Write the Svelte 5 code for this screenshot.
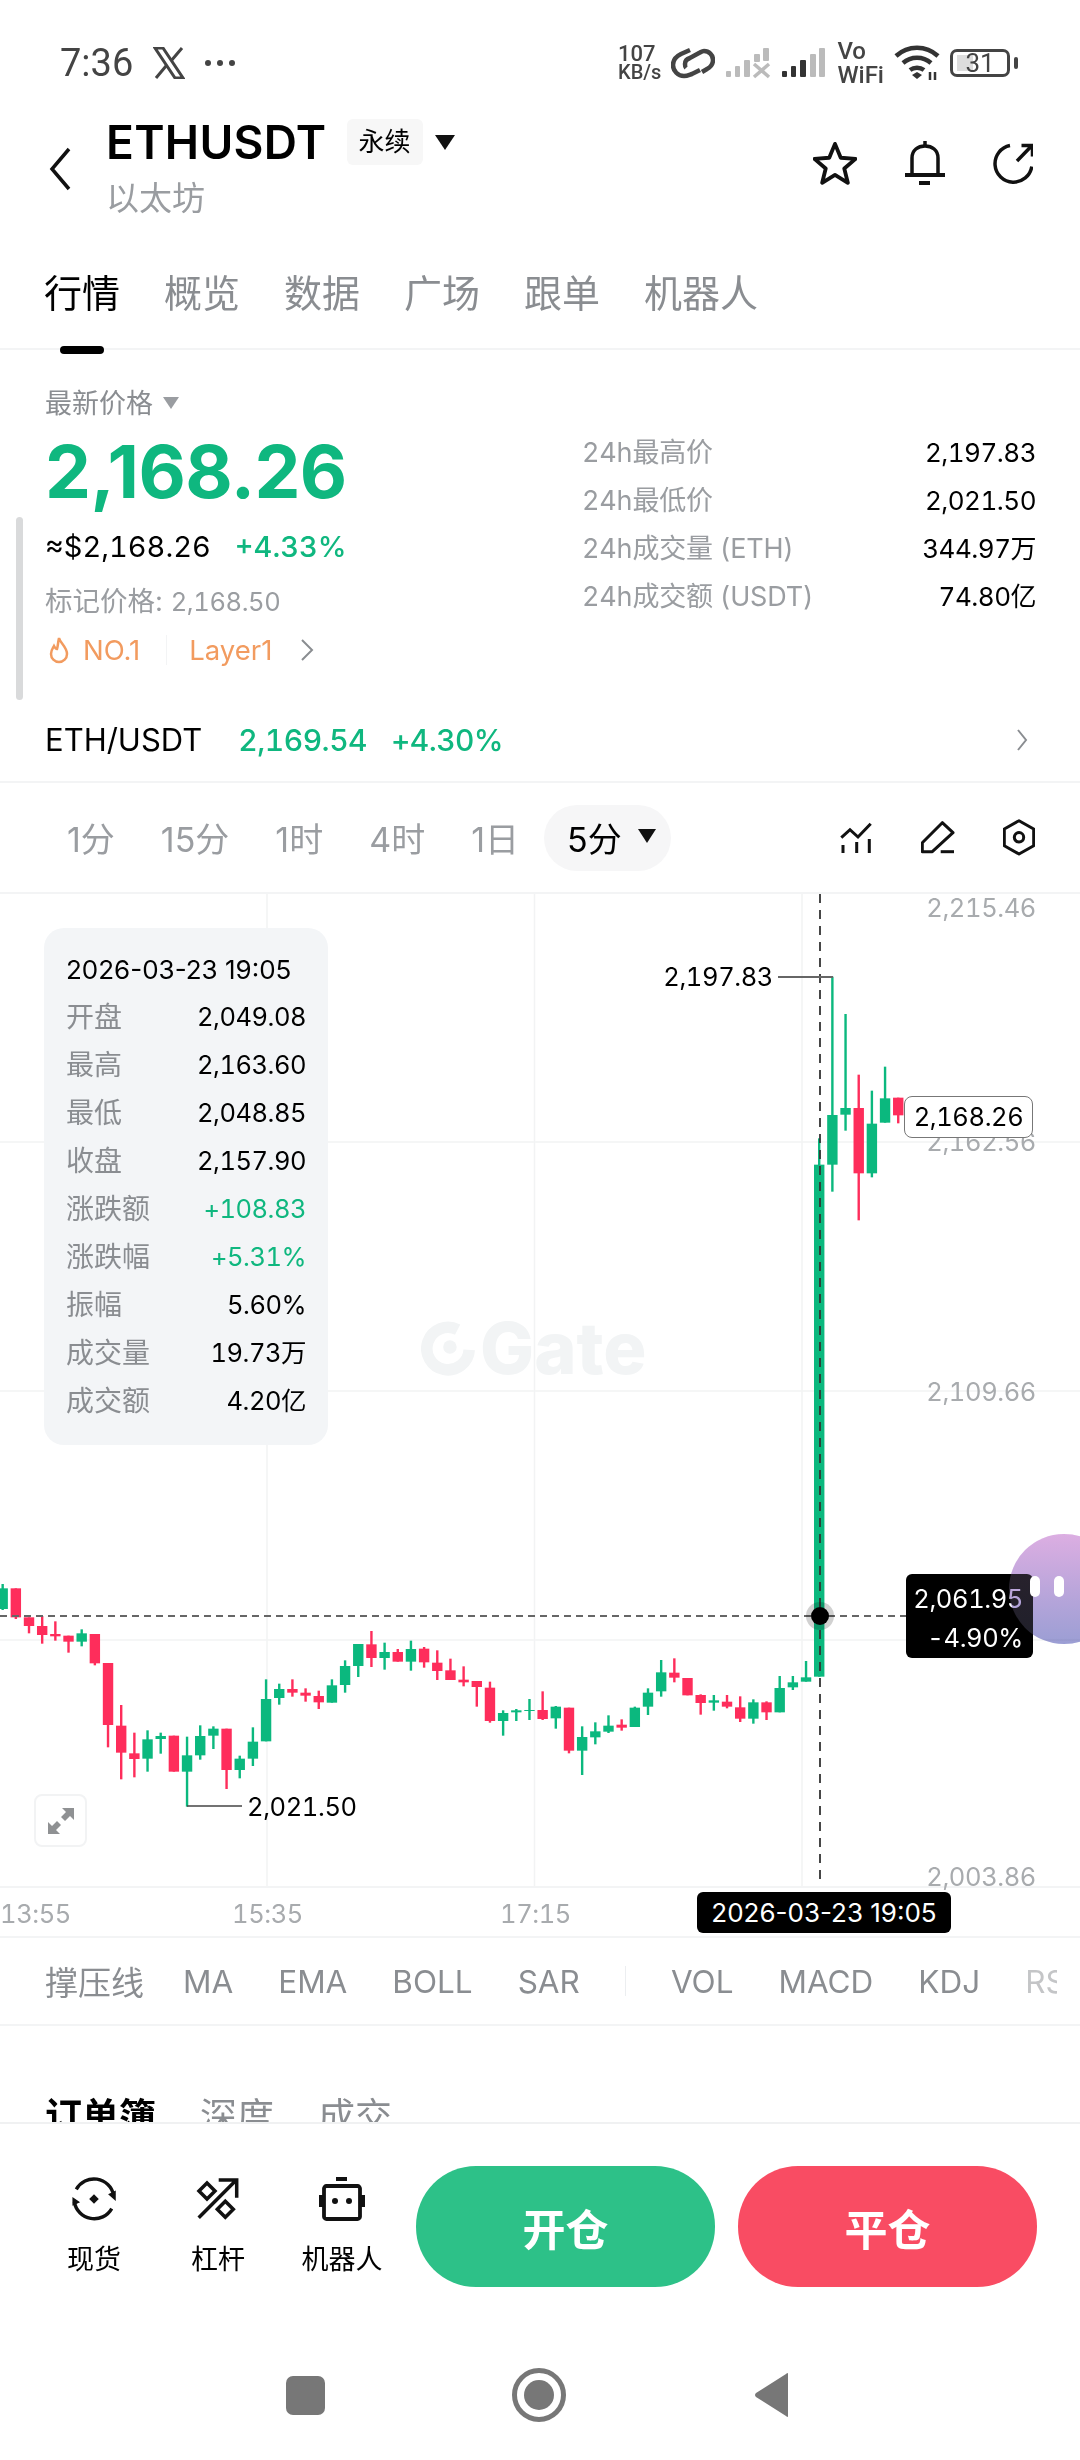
<script>
	// [up, bodyTop, bodyBottom, wickTop, wickBottom] in 1/3 px from y = 1540
	const candles = [
		[1, 145, 207, 132, 210],
		[0, 145, 232, 145, 237],
		[0, 232, 258, 232, 280],
		[0, 258, 285, 228, 311],
		[0, 282, 289, 244, 302],
		[0, 287, 305, 287, 338],
		[1, 280, 305, 268, 319],
		[0, 282, 370, 282, 376],
		[0, 369, 555, 369, 622],
		[0, 557, 638, 495, 718],
		[0, 640, 657, 578, 712],
		[1, 598, 656, 571, 695],
		[1, 588, 597, 578, 641],
		[0, 587, 695, 587, 695],
		[1, 646, 695, 590, 800],
		[1, 588, 646, 556, 659],
		[1, 566, 587, 559, 627],
		[0, 566, 690, 566, 747],
		[1, 656, 690, 647, 715],
		[1, 605, 656, 562, 678],
		[1, 477, 604, 418, 604],
		[1, 447, 474, 431, 494],
		[0, 447, 458, 418, 470],
		[0, 458, 467, 445, 485],
		[0, 468, 487, 452, 507],
		[1, 436, 488, 418, 488],
		[1, 378, 435, 361, 458],
		[1, 312, 378, 312, 411],
		[0, 313, 354, 273, 381],
		[1, 336, 354, 308, 389],
		[0, 336, 365, 327, 365],
		[1, 327, 365, 302, 392],
		[0, 326, 367, 321, 383],
		[0, 368, 393, 331, 420],
		[0, 391, 420, 356, 420],
		[0, 419, 427, 379, 439],
		[0, 423, 441, 423, 500],
		[0, 443, 543, 425, 548],
		[1, 519, 543, 511, 587],
		[1, 511, 517, 507, 543],
		[1, 510, 513, 477, 540],
		[0, 510, 537, 454, 540],
		[1, 500, 535, 498, 566],
		[0, 503, 632, 503, 640],
		[1, 591, 632, 559, 705],
		[1, 574, 592, 547, 613],
		[1, 557, 575, 526, 579],
		[0, 554, 563, 538, 572],
		[1, 503, 561, 500, 561],
		[1, 458, 500, 445, 525],
		[1, 397, 454, 360, 470],
		[0, 398, 413, 355, 427],
		[0, 414, 466, 414, 466],
		[0, 465, 489, 463, 524],
		[1, 481, 488, 465, 512],
		[0, 485, 500, 465, 505],
		[0, 502, 536, 469, 546],
		[1, 487, 536, 478, 551],
		[0, 487, 517, 484, 540],
		[1, 444, 517, 408, 517],
		[1, 427, 442, 408, 450],
		[1, 412, 425, 363, 425],
		[1, -1126, 410, -1205, 410],
		[1, -1275, -1126, -1690, -1045],
		[1, -1296, -1276, -1578, -1228],
		[0, -1296, -1100, -1396, -959],
		[1, -1249, -1100, -1348, -1088],
		[1, -1325, -1252, -1420, -1252],
		[0, -1327, -1274, -1327, -1250]
	];
	const cx = (i) => 2.67 + 13.17 * i;
	const cy = (v) => 1540 + v / 3;

	const tabs = ['行情', '概览', '数据', '广场', '跟单', '机器人'];
	const stats = [
		['24h最高价', '2,197.83'],
		['24h最低价', '2,021.50'],
		['24h成交量 (ETH)', '344.97万'],
		['24h成交额 (USDT)', '74.80亿']
	];
	const intervals = ['1分', '15分', '1时', '4时', '1日'];
	const ohlc = [
		['开盘', '2,049.08'],
		['最高', '2,163.60'],
		['最低', '2,048.85'],
		['收盘', '2,157.90'],
		['涨跌额', '+108.83', true],
		['涨跌幅', '+5.31%', true],
		['振幅', '5.60%'],
		['成交量', '19.73万'],
		['成交额', '4.20亿']
	];
	const yLabels = [
		['2,215.46', 14],
		['2,162.56', 248],
		['2,109.66', 498],
		['2,003.86', 983]
	];
	const mainInd = ['MA', 'EMA', 'BOLL', 'SAR'];
	const subInd = ['VOL', 'MACD', 'KDJ'];
</script>

<div class="page">
	<div class="status">
		<div class="status-left">
			<span class="time">7:36</span>
			<svg width="32" height="32" viewBox="0 0 32 32" class="x-logo">
				<path d="M2 1h8l20 30h-8z" fill="none" stroke="#444" stroke-width="3" />
				<path d="M29 1 18 14M13 19 3 31" stroke="#444" stroke-width="3" fill="none" />
			</svg>
			<span class="dots"><i></i><i></i><i></i></span>
		</div>
		<div class="status-right">
			<div class="speed"><b>107</b><span>KB/s</span></div>
			<svg width="44" height="34" viewBox="0 0 44 34" fill="none" stroke="#444" stroke-width="4.5">
				<path d="M19 4 10 8C4 11 2 15 2 19c0 6 5 11 11 11 3 0 5-1 8-2l8-4" />
				<path d="M15 22c-1-1-1-2-1-4 0-3 2-5 5-6l9-5c2-1 3-2 5-2 5 0 9 4 9 9 0 4-2 7-6 9l-5 3" />
			</svg>
			<svg width="46" height="32" viewBox="0 0 46 32" fill="#bbb">
				<rect x="1" y="24" width="5" height="6" rx="1" />
				<rect x="10" y="19" width="5" height="11" rx="1" />
				<rect x="19" y="13" width="6" height="17" rx="1" />
				<rect x="29" y="7" width="6" height="8" rx="1" />
				<rect x="38" y="1" width="6" height="13" rx="1" />
				<path d="M29 17l15 13M44 17 29 30" stroke="#bbb" stroke-width="3.5" />
			</svg>
			<svg width="46" height="32" viewBox="0 0 46 32">
				<rect x="1" y="24" width="5" height="6" rx="1" fill="#333" />
				<rect x="10" y="19" width="5" height="11" rx="1" fill="#333" />
				<rect x="19" y="13" width="6" height="17" rx="1" fill="#333" />
				<rect x="29" y="7" width="6" height="23" rx="1" fill="#bbb" />
				<rect x="38" y="1" width="6" height="29" rx="1" fill="#bbb" />
			</svg>
			<div class="vowifi"><span>Vo</span><span>WiFi</span></div>
			<svg width="46" height="36" viewBox="0 0 46 36" fill="none" stroke="#333" stroke-width="4.5">
				<path d="M2 11c12-11 30-11 42 0" />
				<path d="M9 18c8-7 20-7 28 0" />
				<path d="M16 25c4-3 10-3 14 0" />
				<path d="M23 34l-5-4 5-3 5 3z" fill="#333" stroke="none" />
				<path d="M36 27v8M41 27v8" stroke-width="2.5" />
			</svg>
			<div class="battery">
				<div class="fill"></div>
				<span>31</span>
			</div>
			<div class="nub"></div>
		</div>
	</div>

	<div class="header">
		<svg width="24" height="46" viewBox="0 0 24 46" fill="none" stroke="#111" stroke-width="3.5" class="back">
			<path d="M21 3 4 23l17 20" />
		</svg>
		<div class="title">
			<div class="title-row">
				<span class="symbol">ETHUSDT</span>
				<span class="badge">永续</span>
				<span class="caret"></span>
			</div>
			<div class="subtitle">以太坊</div>
		</div>
		<div class="header-icons">
			<svg width="44" height="44" viewBox="0 0 46 46" fill="none" stroke="#111" stroke-width="4" stroke-linejoin="round">
				<path d="M23 3l6 14.500 15.500 1.200-11.800 10 3.700 15L23 35.500 9.600 43.700l3.700-15-11.800-10L17 17.500z" />
			</svg>
			<svg width="40" height="46" viewBox="0 0 40 46" fill="none" stroke="#111" stroke-width="3.5">
				<path d="M7 33V18C7 10 13 6 20 6s13 4 13 12v15" />
				<path d="M20 1v5" />
				<path d="M0 35h40" stroke-width="3.8" />
				<path d="M14 43h11" stroke-width="4" />
			</svg>
			<svg width="40" height="42" viewBox="0 0 40 42" fill="none" stroke="#111" stroke-width="3.5">
				<path d="M17 3.500A18.500 18.500 0 1 0 38.800 24.500" />
				<path d="M24 19 39 3.500M28.500 3.500h11v11" />
			</svg>
		</div>
	</div>

	<div class="tabs">
		{#each tabs as tab, i}
			<div class="tab" class:active={i === 0}>{tab}</div>
		{/each}
	</div>

	<div class="overview">
		<div class="scroll-thumb"></div>
		<div class="price-col">
			<div class="latest">最新价格 <span class="caret small"></span></div>
			<div class="price">2,168.26</div>
			<div class="approx"><span>≈$2,168.26</span><span class="green">+4.33%</span></div>
			<div class="mark">标记价格: <span class="num">2,168.50</span></div>
			<div class="rank">
				<svg width="22" height="28" viewBox="0 0 22 28" fill="none" stroke="#f29b5f" stroke-width="2.5">
					<path d="M11 2c1 5 8 9 8 16a8 8 0 0 1-16 0c0-4 2-6 3-8 1 2 2 3 3 3 1-3 1-7 2-11z" />
				</svg>
				<span class="no">NO.1</span>
				<span class="rank-sep"></span>
				<span>Layer1</span>
				<svg width="14" height="24" viewBox="0 0 14 24" fill="none" stroke="#8a8d91" stroke-width="2" class="rank-arrow">
					<path d="M2 2l10 10L2 22" />
				</svg>
			</div>
		</div>
		<div class="stats">
			{#each stats as [label, value]}
				<div class="stat"><span class="stat-label">{label}</span><span>{value}</span></div>
			{/each}
		</div>
	</div>

	<div class="spot-row">
		<span class="pair">ETH/USDT</span>
		<span class="green spot-price">2,169.54</span>
		<span class="green spot-pct">+4.30%</span>
		<svg width="12" height="24" viewBox="0 0 12 24" fill="none" stroke="#8a8d91" stroke-width="2" class="spot-arrow">
			<path d="M2 2l8 10-8 10" />
		</svg>
	</div>

	<div class="intervals">
		{#each intervals as item}
			<span class="interval">{item}</span>
		{/each}
		<span class="interval-pill">5分<span class="caret"></span></span>
		<div class="interval-icons">
			<svg width="33" height="32" viewBox="0 0 33 32" fill="none" stroke="#111" stroke-width="3">
				<path d="M1.300 15.700 10 7.700l8 7.300L30.700 1.700" />
				<path d="M3 23v8M16.700 20v11M29.300 17v14" />
			</svg>
			<svg width="34" height="33" viewBox="0 0 34 33" fill="none" stroke="#111" stroke-width="3" stroke-linejoin="round">
				<path d="M1.300 21.700 21.300 1.700 32 11.700 11.300 30.700h-10z" />
				<path d="M19.700 30.700H33" />
			</svg>
			<svg width="32" height="37" viewBox="0 0 32 37" fill="none" stroke="#111" stroke-width="3" stroke-linejoin="round">
				<path d="M16 1.700 30.700 10v16.700L16 35 1.300 26.700V10z" />
				<circle cx="16" cy="18.300" r="4.700" />
			</svg>
		</div>
	</div>

	<div class="chart">
		<svg class="plot" width="1080" height="992" viewBox="0 894 1080 992">
			<g stroke="#f2f3f4" stroke-width="1.5">
				<path d="M267 894v994M534.500 894v994M802 894v994" />
				<path d="M0 1142h1080M0 1391h1080M0 1640h1080" />
			</g>
			{#each candles as [up, top, bottom, wickTop, wickBottom], i}
				<g fill={up ? '#0bb87e' : '#fe2d5b'}>
					<rect x={cx(i) - 1.2} y={cy(wickTop)} width="2.4" height={cy(wickBottom) - cy(wickTop)} />
					<rect x={cx(i) - 5.2} y={cy(top)} width="10.4" height={cy(bottom) - cy(top)} />
				</g>
			{/each}
			<path d="M0 1616h906" stroke="#666" stroke-width="1.8" stroke-dasharray="7 5" />
			<path d="M820 894v994" stroke="#333" stroke-width="1.8" stroke-dasharray="9 7" />
			<circle cx="820" cy="1616" r="14" fill="#000" opacity="0.18" />
			<circle cx="820" cy="1616" r="9" fill="#000" />
			<path d="M778 977h55" stroke="#666" stroke-width="1.8" />
			<path d="M187 1806h55" stroke="#444" stroke-width="1.6" />
		</svg>

		<div class="watermark">
			<svg width="54" height="56" viewBox="0 0 56 56" fill="none" stroke="#f2f4f5" stroke-width="12">
				<path d="M38 9a22 22 0 1 0 12 21" />
				<circle cx="30" cy="27" r="7" fill="#f2f4f5" stroke="none" />
			</svg>
			<span>Gate</span>
		</div>

		{#each yLabels as [text, top]}
			<span class="y-label" style="top: {top - 13}px">{text}</span>
		{/each}

		<div class="ohlc">
			<div class="ohlc-date">2026-03-23 19:05</div>
			{#each ohlc as [label, value, up]}
				<div class="ohlc-row">
					<span class="ohlc-label">{label}</span>
					<span class:green={up}>{value}</span>
				</div>
			{/each}
		</div>

		<span class="mark-label high">2,197.83</span>
		<span class="mark-label low">2,021.50</span>

		<div class="last-price">2,168.26</div>

		<div class="cross-price">
			<span>2,061.95</span>
			<span>-4.90%</span>
		</div>
		<div class="bubble"></div>
		<div class="bubble tint"></div>
		<div class="bubble-eyes"><i></i><i></i></div>

		<div class="expand">
			<svg width="28" height="28" viewBox="0 0 28 28" fill="#8f9193">
				<path d="M15 1h12v12l-4-4-5 5-4-4 5-5z" />
				<path d="M13 27H1V15l4 4 5-5 4 4-5 5z" />
			</svg>
		</div>
	</div>

	<div class="time-axis">
		<span class="tick first">13:55</span>
		<span class="tick second">15:35</span>
		<span class="tick third">17:15</span>
		<span class="time-badge">2026-03-23 19:05</span>
	</div>

	<div class="indicators">
		<span class="support">撑压线</span>
		{#each mainInd as item}
			<span>{item}</span>
		{/each}
		<span class="ind-sep"></span>
		{#each subInd as item}
			<span>{item}</span>
		{/each}
		<span class="ind-cut">RSI</span>
	</div>

	<div class="book-tabs">
		<span class="active">订单簿</span>
		<span>深度</span>
		<span>成交</span>
	</div>

	<div class="actions">
		<div class="action">
			<svg width="48" height="48" viewBox="0 0 48 48" fill="none" stroke="#111" stroke-width="3.5">
				<path d="M5.500 14A21 21 0 0 1 44.500 20" />
				<path d="M42.500 34A21 21 0 0 1 3.500 27" />
				<path d="M46.700 15v11l-8-7zM1.500 22v9l8-3.500z" fill="#111" stroke="none" />
				<path d="M24 19l5 5-5 5-5-5z" fill="#111" stroke="none" />
			</svg>
			<span>现货</span>
		</div>
		<div class="action">
			<svg width="44" height="46" viewBox="0 0 44 46" fill="none" stroke="#111" stroke-width="3.5">
				<path d="M2.700 41.700 39.300 5M22.700 4h18v17.700" />
				<path d="M11 7l8 8-8 8-8-8z" />
				<path d="M29.300 25.300l8 8-8 8-8-8z" />
			</svg>
			<span>杠杆</span>
		</div>
		<div class="action">
			<svg width="48" height="46" viewBox="0 0 48 46" fill="none" stroke="#111" stroke-width="3.8" stroke-linejoin="round">
				<rect x="6" y="10" width="36" height="33" rx="2.500" />
				<path d="M18 3h11" stroke-width="4" />
				<rect x="1" y="19" width="4" height="12" fill="#111" stroke="none" />
				<rect x="43" y="19" width="4" height="12" fill="#111" stroke="none" />
				<circle cx="17" cy="25" r="3" fill="#111" stroke="none" />
				<circle cx="31" cy="25" r="3" fill="#111" stroke="none" />
			</svg>
			<span>机器人</span>
		</div>
		<button class="trade open">开仓</button>
		<button class="trade close">平仓</button>
	</div>

	<div class="navbar">
		<div class="nav-square"></div>
		<div class="nav-circle"><div></div></div>
		<svg width="36" height="46" viewBox="0 0 36 46" fill="#777">
			<path d="M34 2v42q0 2-2 0L2 25q-2-2 0-4L32 2q2-2 2 0z" />
		</svg>
	</div>
</div>

<style>
	:global(body) {
		margin: 0;
		background: #fff;
	}

	.page {
		width: 1080px;
		height: 2460px;
		overflow: hidden;
		background: #fff;
		color: #000;
		font-family: Inter, 'Noto Sans CJK SC', sans-serif;
	}

	.green {
		color: #0fb77f;
	}

	.caret {
		display: inline-block;
		width: 0;
		height: 0;
		border-left: 10px solid transparent;
		border-right: 10px solid transparent;
		border-top: 15px solid #111;
	}

	.caret.small {
		border-left-width: 8px;
		border-right-width: 8px;
		border-top: 12px solid #9a9da1;
		vertical-align: 4px;
		margin-left: 2px;
	}

	/* status bar */
	.status {
		height: 100px;
		padding: 26px 62px 0 60px;
		box-sizing: border-box;
		display: flex;
		justify-content: space-between;
	}

	.status-left {
		display: flex;
		align-items: center;
		height: 74px;
		color: #444;
	}

	.time {
		font-family: Roboto, sans-serif;
		font-size: 38px;
		width: 93px;
	}

	.x-logo {
		margin-right: 20px;
	}

	.dots {
		display: flex;
		gap: 6px;
	}

	.dots i {
		width: 6px;
		height: 6px;
		border-radius: 50%;
		background: #444;
	}

	.status-right {
		display: flex;
		align-items: center;
		height: 74px;
		gap: 10px;
		color: #444;
		font-family: Roboto, sans-serif;
	}

	.speed {
		display: flex;
		flex-direction: column;
		align-items: flex-start;
		line-height: 19px;
		font-size: 20px;
		font-weight: 500;
	}

	.speed b {
		font-size: 22px;
		font-weight: 500;
	}

	.vowifi {
		display: flex;
		flex-direction: column;
		line-height: 24px;
		font-size: 24px;
		font-weight: 500;
	}

	.battery {
		position: relative;
		width: 60px;
		height: 28px;
		border: 3px solid #444;
		border-radius: 7px;
		box-sizing: border-box;
		text-align: center;
		font-size: 26px;
		line-height: 22px;
	}

	.battery .fill {
		position: absolute;
		left: 4px;
		top: 3px;
		bottom: 3px;
		width: 16px;
		background: #ddd;
	}

	.battery span {
		position: relative;
	}

	.nub {
		width: 4px;
		height: 12px;
		margin-left: -6px;
		border-radius: 2px;
		background: #444;
	}

	/* header */
	.header {
		height: 150px;
		display: flex;
		box-sizing: border-box;
		padding: 15px 47px 0 48px;
		position: relative;
	}

	.back {
		margin: 31px 34px 0 0;
	}

	.title {
		flex: 1;
	}

	.title-row {
		display: flex;
		align-items: center;
		height: 54px;
	}

	.symbol {
		font-size: 46px;
		font-weight: 600;
		letter-spacing: 0.3px;
	}

	.badge {
		margin-left: 20px;
		width: 76px;
		height: 46px;
		background: #f7f7f7;
		border-radius: 6px;
		font-size: 26px;
		line-height: 46px;
		text-align: center;
	}

	.title-row .caret {
		margin-left: 12px;
	}

	.subtitle {
		margin-top: 7px;
		font-size: 33px;
		line-height: 44px;
		color: #9a9da1;
	}

	.header-icons {
		display: flex;
		align-items: center;
		gap: 48px;
		height: 90px;
		margin-top: 3px;
	}

	/* tabs */
	.tabs {
		height: 100px;
		display: flex;
		gap: 44px;
		padding-left: 44px;
		box-sizing: border-box;
		border-bottom: 2px solid #f3f4f5;
	}

	.tab {
		font-size: 38px;
		line-height: 86px;
		color: #8a8d91;
		position: relative;
	}

	.tab.active {
		color: #000;
	}

	.tab.active::after {
		content: '';
		position: absolute;
		left: 16px;
		bottom: -6px;
		width: 44px;
		height: 8px;
		border-radius: 4px;
		background: #000;
	}

	/* price overview */
	.overview {
		height: 332px;
		position: relative;
		display: flex;
		padding: 34px 44px 0 45px;
		box-sizing: border-box;
	}

	.scroll-thumb {
		position: absolute;
		left: 16px;
		top: 167px;
		width: 7px;
		height: 183px;
		border-radius: 4px;
		background: #d9dadb;
	}

	.price-col {
		width: 537px;
	}

	.latest {
		font-size: 27px;
		line-height: 40px;
		color: #8a8d91;
	}

	.price {
		margin-top: 6px;
		font-size: 73px;
		font-weight: 700;
		line-height: 84px;
		color: #0fb77f;
		letter-spacing: -0.6px;
	}

	.approx {
		display: flex;
		gap: 24px;
		margin-top: 13px;
		font-size: 29px;
		line-height: 40px;
		font-variant-numeric: tabular-nums;
	}

	.approx .green {
		font-weight: 500;
		font-size: 29px;
	}

	.mark {
		margin-top: 16px;
		font-size: 27.5px;
		line-height: 36px;
		color: #9a9da1;
	}

	.mark .num {
		font-size: 25.500px;
		letter-spacing: -0.4px;
		font-variant-numeric: tabular-nums;
	}

	.rank {
		display: flex;
		align-items: center;
		margin-top: 12px;
		height: 36px;
		font-size: 27.5px;
		color: #f29b5f;
	}

	.rank svg:first-child {
		margin: 0 13px 0 3px;
	}

	.rank-sep {
		width: 1px;
		height: 30px;
		background: #f3f4f5;
		margin: 0 22px 0 26px;
	}

	.rank-arrow {
		margin-left: 28px;
	}

	.stats {
		flex: 1;
		display: flex;
		flex-direction: column;
		padding-top: 45px;
	}

	.stat {
		display: flex;
		justify-content: space-between;
		height: 48px;
		line-height: 48px;
		font-size: 26px;
		letter-spacing: -0.5px;
		font-variant-numeric: tabular-nums;
	}

	.stat-label {
		color: #9a9da1;
		font-size: 27px;
		letter-spacing: -0.2px;
	}

	.spot-row {
		height: 101px;
		display: flex;
		align-items: center;
		padding: 16px 52px 0 45px;
		box-sizing: border-box;
		font-size: 31px;
		border-bottom: 2px solid #f3f4f5;
	}

	.spot-price {
		margin: 0 24px 0 36px;
		font-size: 30px;
		font-weight: 500;
		letter-spacing: -0.5px;
		font-variant-numeric: tabular-nums;
	}

	.spot-pct {
		font-size: 30px;
		font-weight: 500;
		letter-spacing: -0.6px;
		font-variant-numeric: tabular-nums;
	}

	.spot-arrow {
		margin-left: auto;
	}

	/* intervals */
	.intervals {
		height: 111px;
		display: flex;
		align-items: center;
		padding-left: 67px;
		box-sizing: border-box;
		font-size: 34px;
		color: #9a9da1;
		border-bottom: 2px solid #f3f4f5;
	}

	.interval {
		margin-right: 46px;
	}

	.interval-pill {
		display: flex;
		align-items: center;
		width: 127px;
		height: 66px;
		margin-left: -21px;
		padding-left: 23px;
		box-sizing: border-box;
		border-radius: 33px;
		background: #f6f6f7;
		color: #000;
	}

	.interval-pill .caret {
		margin: -4px 0 0 16px;
		border-left-width: 9px;
		border-right-width: 9px;
		border-top-width: 14px;
	}

	.interval-icons {
		margin-left: auto;
		margin-right: 45px;
		display: flex;
		align-items: center;
		gap: 48px;
	}

	/* chart */
	.chart {
		position: relative;
		height: 994px;
		border-bottom: 2px solid #f3f4f5;
		box-sizing: border-box;
	}

	.plot {
		position: absolute;
		left: 0;
		top: 0;
	}

	.watermark {
		position: absolute;
		left: 421px;
		top: 424px;
		display: flex;
		align-items: center;
		gap: 5px;
		color: #f2f4f5;
		font-size: 72px;
		line-height: 60px;
		font-weight: 800;
	}

	.y-label {
		position: absolute;
		right: 44px;
		font-size: 25.500px;
		letter-spacing: -0.4px;
		line-height: 26px;
		color: #a8abae;
		font-variant-numeric: tabular-nums;
	}

	.ohlc {
		position: absolute;
		left: 44px;
		top: 34px;
		width: 284px;
		height: 517px;
		box-sizing: border-box;
		padding: 22px 22px 0 22px;
		border-radius: 20px;
		background: #f3f5f7;
		font-size: 25.500px;
	}

	.ohlc-date {
		height: 40px;
		line-height: 40px;
		margin-bottom: 4px;
		font-size: 26px;
		white-space: nowrap;
	}

	.ohlc-row {
		display: flex;
		justify-content: space-between;
		height: 48px;
		line-height: 46px;
		letter-spacing: -0.5px;
		font-variant-numeric: tabular-nums;
	}

	.ohlc-label {
		color: #8a8d91;
		font-size: 28px;
		letter-spacing: 0;
	}

	.mark-label {
		position: absolute;
		font-size: 25.500px;
		letter-spacing: -0.4px;
		line-height: 32px;
		font-variant-numeric: tabular-nums;
	}

	.high {
		right: 307px;
		top: 67px;
	}

	.low {
		left: 247px;
		top: 897px;
	}

	.last-price {
		position: absolute;
		left: 904px;
		top: 202px;
		width: 129px;
		height: 42px;
		box-sizing: border-box;
		border: 1.5px solid #777;
		border-radius: 8px;
		background: #fff;
		font-size: 25.500px;
		letter-spacing: -0.4px;
		line-height: 39px;
		text-align: center;
		font-variant-numeric: tabular-nums;
	}

	.cross-price {
		position: absolute;
		left: 906px;
		top: 680px;
		width: 127px;
		height: 84px;
		box-sizing: border-box;
		padding: 5px 10px 0 0;
		display: flex;
		flex-direction: column;
		align-items: flex-end;
		border-radius: 6px;
		background: #000;
		color: #fff;
		font-size: 25.500px;
		letter-spacing: -0.4px;
		line-height: 39px;
		font-variant-numeric: tabular-nums;
	}

	.bubble {
		position: absolute;
		left: 1009px;
		top: 640px;
		width: 110px;
		height: 110px;
		border-radius: 50%;
		background: linear-gradient(#dcaee2, #9b9ed4);
		mix-blend-mode: multiply;
	}

	.bubble.tint {
		opacity: 0.2;
		mix-blend-mode: normal;
	}

	.bubble-eyes {
		position: absolute;
		left: 1030px;
		top: 682px;
		display: flex;
		gap: 14px;
	}

	.bubble-eyes i {
		width: 10px;
		height: 21px;
		border-radius: 5px;
		background: #fff;
	}

	.expand {
		position: absolute;
		left: 34px;
		top: 900px;
		width: 53px;
		height: 53px;
		box-sizing: border-box;
		display: flex;
		align-items: center;
		justify-content: center;
		border: 2px solid #f2f3f4;
		border-radius: 8px;
		background: #fff;
	}

	/* time axis */
	.time-axis {
		position: relative;
		height: 48px;
		font-size: 25.500px;
		letter-spacing: -0.4px;
		line-height: 52px;
		color: #a8abae;
		border-bottom: 2px solid #f3f4f5;
		font-variant-numeric: tabular-nums;
	}

	.tick {
		position: absolute;
		top: 0;
	}

	.first {
		left: 0;
	}

	.second {
		left: 232px;
	}

	.third {
		left: 500px;
	}

	.time-badge {
		position: absolute;
		left: 697px;
		top: 4px;
		width: 254px;
		height: 41px;
		border-radius: 6px;
		background: #000;
		color: #fff;
		font-size: 26px;
		letter-spacing: 0;
		font-variant-numeric: normal;
		line-height: 41px;
		text-align: center;
	}

	/* indicators */
	.indicators {
		height: 88px;
		display: flex;
		align-items: center;
		gap: 45px;
		padding-left: 45px;
		box-sizing: border-box;
		overflow: hidden;
		font-size: 31.5px;
		color: #8a8d91;
		border-bottom: 2px solid #f3f4f5;
	}

	.indicators span {
		flex: none;
	}

	.indicators .support {
		font-size: 33px;
		margin-right: -6px;
	}

	.ind-sep {
		width: 1px;
		height: 30px;
		background: #eceef0;
	}

	.ind-cut {
		width: 32px;
		overflow: hidden;
		white-space: nowrap;
		opacity: 0.5;
	}

	.book-tabs {
		height: 98px;
		display: flex;
		gap: 44px;
		padding: 66px 0 0 45px;
		box-sizing: border-box;
		overflow: hidden;
		font-size: 37px;
		line-height: 50px;
		color: #8a8d91;
		border-bottom: 2px solid #f0f1f2;
	}

	.book-tabs .active {
		color: #000;
		font-weight: 700;
	}

	/* bottom actions */
	.actions {
		height: 212px;
		display: flex;
		align-items: flex-start;
		padding-top: 42px;
		box-sizing: border-box;
		position: relative;
	}

	.action {
		position: absolute;
		top: 52px;
		width: 124px;
		display: flex;
		flex-direction: column;
		align-items: center;
		gap: 19px;
		font-size: 27px;
		line-height: 38px;
	}

	.action svg {
		height: 46px;
	}

	.action:nth-child(1) {
		left: 32px;
	}

	.action:nth-child(2) {
		left: 156px;
	}

	.action:nth-child(3) {
		left: 280px;
	}

	.trade {
		width: 299px;
		height: 121px;
		border: 0;
		border-radius: 60px;
		color: #fff;
		font-family: inherit;
		font-size: 43px;
		font-weight: 700;
	}

	.open {
		margin-left: 416px;
		background: #2dc188;
	}

	.close {
		margin-left: 23px;
		background: #f94c63;
	}

	.navbar {
		height: 126px;
		display: flex;
		align-items: center;
		box-sizing: border-box;
		padding: 0 0 8px 286px;
	}

	.nav-square {
		width: 39px;
		height: 39px;
		border-radius: 7px;
		background: #777;
	}

	.nav-circle {
		width: 54px;
		height: 54px;
		margin: 0 188px 0 187px;
		box-sizing: border-box;
		border: 5px solid #777;
		border-radius: 50%;
		display: flex;
		align-items: center;
		justify-content: center;
	}

	.nav-circle div {
		width: 30px;
		height: 30px;
		border-radius: 50%;
		background: #777;
	}
</style>
